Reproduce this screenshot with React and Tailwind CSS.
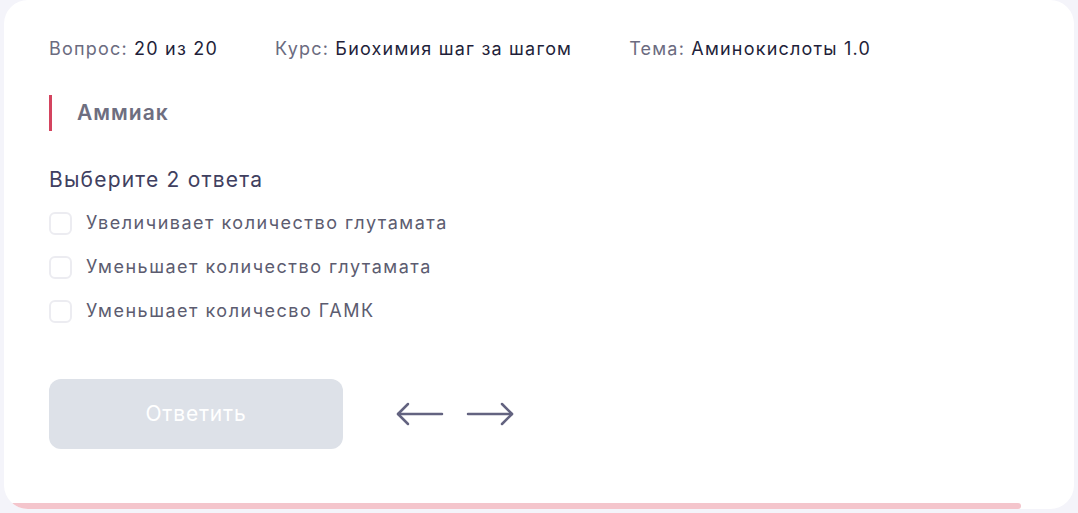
import React, { useState } from "react";

const options = [
  "Увеличивает количество глутамата",
  "Уменьшает количество глутамата",
  "Уменьшает количесво ГАМК",
];

function Arrow({ dir }) {
  return (
    <svg width="50" height="26" viewBox="0 0 50 26" fill="none" stroke="#636380" strokeWidth="2.5" strokeLinecap="round" strokeLinejoin="round">
      {dir === "left" ? (
        <>
          <path d="M3 13h44" />
          <path d="M13 3L3 13l10 10" />
        </>
      ) : (
        <>
          <path d="M3 13h44" />
          <path d="M37 3l10 10-10 10" />
        </>
      )}
    </svg>
  );
}

export default function App() {
  const [checked, setChecked] = useState([]);

  const toggle = (i) => {
    setChecked(checked.includes(i) ? checked.filter((c) => c !== i) : [...checked, i]);
  };

  return (
    <div className="w-full h-[513px] bg-[#f4f4fa] px-[4px] pb-[4px]" style={{ fontFamily: "Inter, 'Noto Sans', sans-serif" }}>
      <div className="relative h-full bg-white rounded-[24px] overflow-hidden flex flex-col px-[45px] pt-[37px]">

        {/* meta */}
        <div className="flex items-center gap-[57px] text-[18px] leading-[24px] tracking-[1.2px]">
          <div className="text-[#6b6b80]">
            Вопрос: <span className="text-[#1f1f3a]">20 из 20</span>
          </div>
          <div className="text-[#6b6b80]">
            Курс: <span className="text-[#1f1f3a]">Биохимия шаг за шагом</span>
          </div>
          <div className="text-[#6b6b80]">
            Тема: <span className="text-[#1f1f3a]">Аминокислоты 1.0</span>
          </div>
        </div>

        {/* title */}
        <div className="mt-[34px] border-l-[3px] border-[#d4445f] pl-[25px] h-[36px] flex items-center">
          <h2 className="text-[21px] font-semibold text-[#6e6e80] tracking-[1px]">Аммиак</h2>
        </div>

        <p className="mt-[35px] text-[21px] leading-[28px] text-[#3f4060] tracking-[1.2px]">Выберите 2 ответа</p>

        <div className="mt-[17px] flex flex-col gap-[20px]">
          {options.map((o, i) => (
            <label key={i} className="flex items-center gap-[14px] cursor-pointer" onClick={() => toggle(i)}>
              <span className={`w-[23px] h-[23px] rounded-[6px] border-2 ${checked.includes(i) ? "border-[#d4445f] bg-[#d4445f]" : "border-[#ececf1]"}`} />
              <span className="text-[18px] leading-[24px] text-[#5c5c70] tracking-[1.5px]">{o}</span>
            </label>
          ))}
        </div>

        {/* actions */}
        <div className="mt-[56px] flex items-center">
          <button className="w-[294px] h-[70px] rounded-[12px] bg-[#dde1e8] text-white text-[21px] tracking-[0.8px]">
            Ответить
          </button>
          <div className="ml-[52px] flex items-center gap-[20px]">
            <Arrow dir="left" />
            <Arrow dir="right" />
          </div>
        </div>

        {/* progress */}
        <div className="absolute left-0 bottom-0 w-[1017px] h-[6px] bg-[#f4c5cc] rounded-r-full" />
      </div>
    </div>
  );
}
